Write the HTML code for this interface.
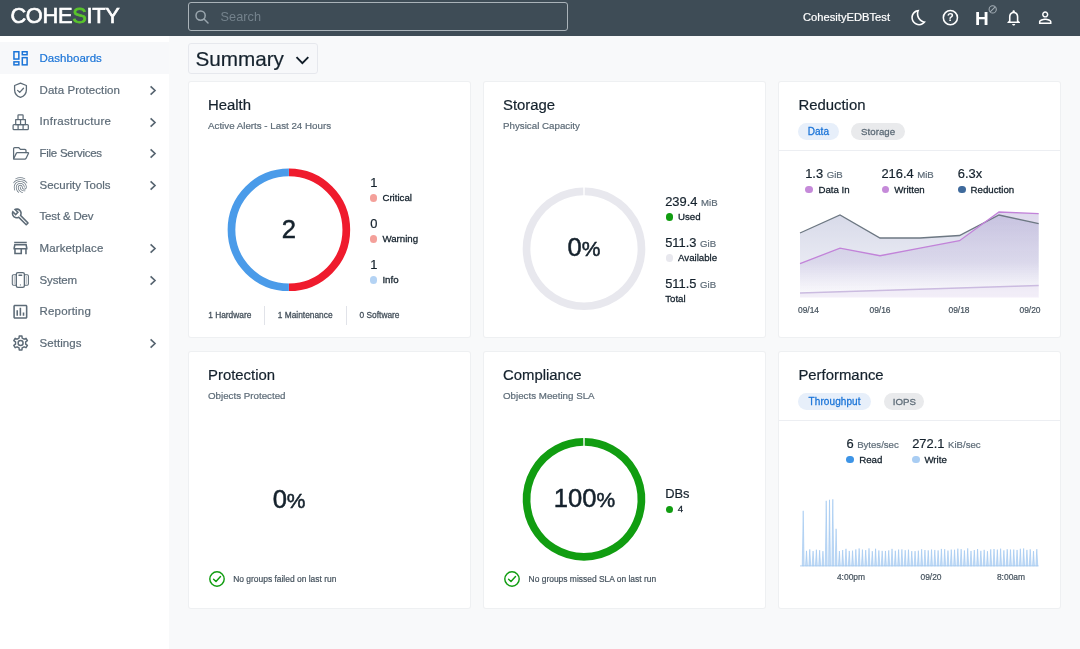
<!DOCTYPE html>
<html lang="en">
<head>
<meta charset="utf-8">
<title>Cohesity Dashboard - Summary</title>
<style>
*{box-sizing:border-box;margin:0;padding:0}
html,body{width:1080px;height:649px;overflow:hidden}
body{font-family:"Liberation Sans",sans-serif;background:#f8f9fa;color:#15222d;position:relative}
.abs{position:absolute}
.t{position:absolute;white-space:nowrap;line-height:1}
#hdr{position:absolute;left:0;top:0;width:1080px;height:36px;background:#3e4c56}
#logo{left:10.4px;top:5.4px;font-size:21.8px;color:#fff;letter-spacing:-0.3px;-webkit-text-stroke:0.65px #fff}
#logo b{font-weight:normal;color:#5ac52c;-webkit-text-stroke:0.8px #5ac52c}
#search{position:absolute;left:188px;top:2px;width:380px;height:29px;border:1px solid #aab3b9;border-radius:3px}
#search .t{left:31.6px;top:7.6px;font-size:12.7px;color:#74828c;letter-spacing:0.05px}
#user{left:803px;top:12px;font-size:11.2px;color:#fff}
#hq{left:945.4px;top:12.1px;width:10px;text-align:center;font-size:11px;font-weight:bold;color:#fff}
#hH{left:975.4px;top:9.7px;font-size:18.6px;font-weight:bold;color:#fff;transform:scaleX(1.02);transform-origin:0 0}
#side{position:absolute;left:0;top:36px;width:169px;height:613px;background:#fff}
.nav{position:absolute;left:0;width:169px;height:31.67px}
.nav.act{background:#f7f8fa}
.nav .t{left:39.5px;top:10.8px;font-size:11.5px;color:#5d6b77;letter-spacing:0.04px}
.nav.act .t{color:#1a74d8}
.nav svg.ic{position:absolute;left:10px;top:6px;width:20px;height:20px;overflow:visible}
.nav svg.ch{position:absolute;left:148.3px;top:11.1px;width:10px;height:11px}
#sumbox{position:absolute;left:187.8px;top:43.3px;width:130px;height:30.4px;border:1px solid #e6e8ed;border-radius:3px;background:#f7f8fa}
#sum{left:6.6px;top:4.4px;font-size:20.7px;color:#15222d}
.card{position:absolute;width:281.2px;height:255.6px;background:#fff;box-shadow:0 0 0 1px #eef0f2;border-radius:2px}
.title{font-size:14.9px;color:#15222d}
.sub{font-size:9.75px;color:#5d6b77}
.num{font-size:12.9px;color:#15222d}
.unit{font-size:9.6px;color:#5d6b77}
.lg{font-size:9.7px;color:#15222d}
.dot{position:absolute;border-radius:50%}
.foot{font-size:8.35px;color:#44505b}
.ax{font-size:8.45px;color:#46535e}
.pill{position:absolute;height:16.6px;border-radius:8.5px;font-size:9.7px;line-height:17.6px;text-align:center;white-space:nowrap}
.pill.on{background:#e7effa;color:#1a74d8}
.pill.off{background:#e9eaec;color:#5d6b77}
.hr{position:absolute;height:1px;background:#eceef2}
.big{font-size:25.6px;color:#15222d;-webkit-text-stroke:0.5px #15222d}
.pct{font-size:21px}
#root{position:absolute;left:0;top:0;width:1080px;height:649px;will-change:transform}
.title,.num,.lg,.sub,.unit,.foot,.ax,.nav .t,#user,#sum{-webkit-text-stroke:0.2px currentColor}
.lg,.foot,.pill{-webkit-text-stroke:0.28px currentColor}
.pill.on{font-size:10px;letter-spacing:0.1px}
</style>
</head>
<body>
<div id="root">
<div id="hdr">
  <div class="t" id="logo">COHE<b>S</b>ITY</div>
  <div id="search">
    <svg class="abs" style="left:4.8px;top:5.7px" width="16" height="16" viewBox="0 0 16 16" fill="none" stroke="#9aa6ae" stroke-width="1.5"><circle cx="6.6" cy="6.6" r="4.6"/><path d="M10 10 L14 14" stroke-linecap="round"/></svg>
    <div class="t">Search</div>
  </div>
  <div class="t" id="user">CohesityEDBTest</div>
  <svg class="abs" style="left:900px;top:0" width="180" height="36" viewBox="900 0 180 36" fill="#fff">
    <g transform="translate(909.7 8.2) scale(0.785)"><path d="M9.27 4.49c-1.63 7.54 3.75 12.41 7.66 13.8C15.54 19.38 13.81 20 12 20c-4.41 0-8-3.59-8-8 0-3.45 2.2-6.4 5.27-7.51M11.99 2.010C6.4 2.010 2 6.540 2 12c0 5.520 4.480 10 10 10 3.710 0 6.930-2.020 8.660-5.020-7.510-.250-12.090-8.430-8.320-14.970h-.350z"/></g>
    <circle cx="950.4" cy="17.65" r="7.05" fill="none" stroke="#fff" stroke-width="1.55"/>
    <circle cx="992.7" cy="9.4" r="3.6" fill="none" stroke="#a3adb5" stroke-width="1.05"/>
    <path d="M990.2 11.9 L995.2 6.900" fill="none" stroke="#a3adb5" stroke-width="1.05"/>
    <g transform="translate(1004.25 8.2) scale(0.785)"><path d="M12 22c1.1 0 2-.9 2-2h-4c0 1.1.9 2 2 2zm6-6v-5c0-3.070-1.630-5.640-4.500-6.320V4c0-.830-.670-1.500-1.500-1.500s-1.500.670-1.500 1.500v.680C7.640 5.360 6 7.920 6 11v5l-2 2v1h16v-1l-2-2zm-2 1H8v-6c0-2.480 1.510-4.500 4-4.500s4 2.020 4 4.500v6z"/></g>
    <g transform="translate(1035.8 8.2) scale(0.785)"><path d="M12 5.900c1.160 0 2.100.940 2.100 2.100s-.940 2.100-2.100 2.100S9.900 9.160 9.900 8s.940-2.100 2.100-2.100m0 9c2.970 0 6.100 1.460 6.100 2.100v1.100H5.900V17c0-.640 3.130-2.100 6.100-2.100M12 4C9.790 4 8 5.790 8 8s1.790 4 4 4 4-1.790 4-4-1.790-4-4-4zm0 9c-2.670 0-8 1.340-8 4v3h16v-3c0-2.660-5.330-4-8-4z"/></g>
  </svg>
  <div class="t" id="hq">?</div>
  <div class="t" id="hH">H</div>
</div>
<div id="side">
<div class="nav act" style="top:6.30px">
<svg class="ic" viewBox="0 0 20 20"><g fill="none" stroke="#1a74d8" stroke-width="1.5"><rect x="3.95" y="3.75" width="4.9" height="7.3"/><rect x="3.95" y="13.85" width="4.9" height="3"/><rect x="12.3" y="3.75" width="4.8" height="3"/><rect x="12.3" y="9.65" width="4.8" height="7.2"/></g></svg>
<div class="t" id="nav0" style="letter-spacing:0.04px">Dashboards</div>
</div>
<div class="nav" style="top:37.97px">
<svg class="ic" viewBox="0 0 20 20"><g fill="none" stroke="#5d6b77" stroke-width="1.3" stroke-linejoin="round" stroke-linecap="round"><path d="M10.5 3.2 L16.4 5.5 V9.8 C16.4 13.6 13.9 16.3 10.5 17.4 C7.1 16.3 4.6 13.6 4.6 9.8 V5.5 Z"/><path d="M7.6 10.4 L9.7 12.4 L13.5 8.3"/></g></svg>
<div class="t" id="nav1" style="letter-spacing:0.08px">Data Protection</div>
<svg class="ch" viewBox="0 0 10 11"><path d="M2.6 1.3 L7 5.500 L2.6 9.7" fill="none" stroke="#566470" stroke-width="1.65"/></svg>
</div>
<div class="nav" style="top:69.64px">
<svg class="ic" viewBox="0 0 20 20"><g fill="none" stroke="#5d6b77" stroke-width="1.25" stroke-linejoin="round"><rect x="8" y="2.8" width="5.1" height="4.8" rx="0.6"/><path d="M8 7.6 H5.7 V12.5 H15.4 V7.6 H13.1 M10.55 7.6 V12.5"/><rect x="3.1" y="12.5" width="15.2" height="5.15" rx="0.9"/><path d="M8.1 12.5 V17.6 M13.1 12.5 V17.6"/></g></svg>
<div class="t" id="nav2" style="letter-spacing:0.29px">Infrastructure</div>
<svg class="ch" viewBox="0 0 10 11"><path d="M2.6 1.3 L7 5.500 L2.6 9.7" fill="none" stroke="#566470" stroke-width="1.65"/></svg>
</div>
<div class="nav" style="top:101.31px">
<svg class="ic" viewBox="0 0 20 20"><g fill="none" stroke="#5d6b77" stroke-width="1.25" stroke-linejoin="round" stroke-linecap="round"><path d="M3.6 15.8 V5.6 Q3.6 4.5 4.7 4.5 H8.6 L10.4 6.4 H14.9 Q16 6.4 16 7.5 V9.6"/><path d="M3.6 15.8 L6.4 10.1 Q6.7 9.6 7.3 9.6 H17.9 Q18.9 9.6 18.4 10.5 L16 15.4 Q15.6 16 15 16 H4 Q3.6 16 3.6 15.8 Z"/></g></svg>
<div class="t" id="nav3" style="letter-spacing:-0.27px">File Services</div>
<svg class="ch" viewBox="0 0 10 11"><path d="M2.6 1.3 L7 5.500 L2.6 9.7" fill="none" stroke="#566470" stroke-width="1.65"/></svg>
</div>
<div class="nav" style="top:132.98px">
<svg class="ic" viewBox="0 0 20 20"><g transform="translate(0.87 0.65) scale(0.785)"><path fill="#6b7883" d="M17.81 4.47c-.08 0-.16-.02-.23-.06C15.66 3.42 14 3 12.01 3c-1.98 0-3.86.47-5.57 1.41-.24.13-.54.04-.68-.2-.13-.24-.04-.55.2-.68C7.82 2.52 9.86 2 12.01 2c2.13 0 3.99.47 6.03 1.52.25.13.34.43.21.67-.09.18-.26.28-.44.28zM3.5 9.72c-.1 0-.2-.03-.29-.09-.23-.16-.28-.47-.12-.7.99-1.4 2.25-2.5 3.75-3.27C9.98 4.04 14 4.03 17.15 5.65c1.5.77 2.76 1.86 3.75 3.25.16.22.11.54-.12.7-.23.16-.54.11-.7-.12-.9-1.26-2.04-2.25-3.39-2.94-2.87-1.47-6.54-1.47-9.4.01-1.36.7-2.5 1.7-3.4 2.96-.08.14-.23.21-.39.21zm6.25 12.07c-.13 0-.26-.05-.35-.15-.87-.87-1.34-1.43-2.01-2.64-.69-1.23-1.05-2.73-1.05-4.34 0-2.97 2.54-5.39 5.66-5.39s5.66 2.42 5.66 5.39c0 .28-.22.5-.5.5s-.5-.22-.5-.5c0-2.42-2.09-4.39-4.66-4.39-2.57 0-4.66 1.97-4.66 4.39 0 1.44.32 2.77.93 3.85.64 1.15 1.08 1.64 1.85 2.42.19.2.19.51 0 .71-.11.1-.24.15-.37.15zm7.17-1.85c-1.19 0-2.24-.3-3.1-.89-1.49-1.01-2.38-2.65-2.38-4.39 0-.28.22-.5.5-.5s.5.22.5.5c0 1.41.72 2.74 1.94 3.56.71.48 1.54.71 2.54.71.24 0 .64-.03 1.04-.1.27-.05.53.13.58.41.05.27-.13.53-.41.58-.57.11-1.07.12-1.21.12zM14.91 22c-.04 0-.09-.01-.13-.02-1.59-.44-2.63-1.03-3.72-2.1-1.4-1.39-2.17-3.24-2.17-5.22 0-1.62 1.38-2.94 3.08-2.94 1.7 0 3.08 1.32 3.08 2.94 0 1.07.93 1.94 2.08 1.94s2.08-.87 2.08-1.94c0-3.77-3.25-6.83-7.25-6.83-2.84 0-5.44 1.58-6.61 4.03-.39.81-.59 1.76-.59 2.8 0 .78.07 2.01.67 3.61.1.26-.03.55-.29.64-.26.1-.55-.04-.64-.29-.49-1.31-.73-2.61-.73-3.96 0-1.2.23-2.29.68-3.24 1.33-2.79 4.28-4.6 7.51-4.6 4.55 0 8.25 3.51 8.25 7.83 0 1.62-1.38 2.94-3.08 2.94s-3.08-1.32-3.08-2.94c0-1.07-.93-1.94-2.08-1.94s-2.08.87-2.08 1.94c0 1.71.66 3.31 1.87 4.51.95.94 1.86 1.46 3.27 1.85.27.07.42.35.35.61-.05.23-.26.38-.47.38z"/></g></svg>
<div class="t" id="nav4" style="letter-spacing:-0.02px">Security Tools</div>
<svg class="ch" viewBox="0 0 10 11"><path d="M2.6 1.3 L7 5.500 L2.6 9.7" fill="none" stroke="#566470" stroke-width="1.65"/></svg>
</div>
<div class="nav" style="top:164.65px">
<svg class="ic" viewBox="0 0 20 20"><g transform="translate(0.9 0.55) scale(0.783)"><path fill="#5d6b77" d="M22.61 18.99l-9.08-9.08c.93-2.34.45-5.1-1.44-7C9.79.61 6.21.4 3.66 2.26L7.5 6.11 6.08 7.52 2.25 3.69C.39 6.23.6 9.82 2.9 12.11c1.86 1.86 4.57 2.35 6.89 1.48l9.11 9.11c.39.39 1.02.39 1.41 0l2.3-2.3c.4-.38.4-1.01 0-1.41zm-3 1.6l-9.46-9.46c-.61.45-1.29.72-2 .82-1.36.2-2.79-.21-3.83-1.25C3.37 9.76 2.93 8.5 3 7.26l3.09 3.09 4.24-4.24-3.09-3.09c1.24-.07 2.49.37 3.44 1.31 1.08 1.08 1.49 2.57 1.24 3.96-.12.71-.42 1.37-.88 1.96l9.45 9.45-.88.89z"/></g></svg>
<div class="t" id="nav5" style="letter-spacing:-0.17px">Test &amp; Dev</div>
</div>
<div class="nav" style="top:196.32px">
<svg class="ic" viewBox="0 0 20 20"><g transform="translate(1.05 0.5) scale(0.785)"><path fill="#5d6b77" d="M18.36 9l.6 3H5.04l.6-3h12.72M20 4H4v2h16V4zm0 3H4l-1 5v2h1v6h10v-6h4v6h2v-6h1v-2l-1-5zM6 18v-4h6v4H6z"/></g></svg>
<div class="t" id="nav6" style="letter-spacing:0.12px">Marketplace</div>
<svg class="ch" viewBox="0 0 10 11"><path d="M2.6 1.3 L7 5.500 L2.6 9.7" fill="none" stroke="#566470" stroke-width="1.65"/></svg>
</div>
<div class="nav" style="top:227.99px">
<svg class="ic" viewBox="0 0 20 20"><g fill="none" stroke="#5d6b77" stroke-width="1.35" stroke-linejoin="round" stroke-linecap="round"><rect x="6.3" y="2.6" width="8.1" height="14.8" rx="1.7"/><path d="M9 5.2 H11.7"/><circle cx="10.35" cy="14.9" r="0.55" fill="#5d6b77" stroke="none"/><path d="M6.2 4.7 H3.5 Q2.3 4.7 2.3 5.9 V14.1 Q2.3 15.3 3.5 15.3 H6.2" stroke-width="1.05"/><path d="M14.5 4.7 H17.2 Q18.4 4.7 18.4 5.9 V14.1 Q18.4 15.3 17.2 15.3 H14.5" stroke-width="1.05"/><path d="M4.3 6.4 V13.6 M16.4 6.4 V13.6" stroke-width="0.7" stroke-opacity="0.6"/></g></svg>
<div class="t" id="nav7" style="letter-spacing:-0.13px">System</div>
<svg class="ch" viewBox="0 0 10 11"><path d="M2.6 1.3 L7 5.500 L2.6 9.7" fill="none" stroke="#566470" stroke-width="1.65"/></svg>
</div>
<div class="nav" style="top:259.66px">
<svg class="ic" viewBox="0 0 20 20"><g transform="translate(0.95 0.3) scale(0.785)"><path fill="#5d6b77" d="M19 3H5c-1.1 0-2 .9-2 2v14c0 1.1.9 2 2 2h14c1.1 0 2-.9 2-2V5c0-1.1-.9-2-2-2zm0 16H5V5h14v14zM7 10h2v7H7zm4-3h2v10h-2zm4 6h2v4h-2z"/></g></svg>
<div class="t" id="nav8" style="letter-spacing:0.18px">Reporting</div>
</div>
<div class="nav" style="top:291.33px">
<svg class="ic" viewBox="0 0 20 20"><g fill="none" stroke="#5d6b77" stroke-width="1.45" stroke-linejoin="round"><path d="M9.08 5.03 L9.23 2.93 L11.97 2.93 L12.12 5.03 L14.15 6.20 L16.03 5.28 L17.41 7.66 L15.67 8.83 L15.67 11.17 L17.41 12.34 L16.03 14.72 L14.15 13.80 L12.12 14.97 L11.97 17.07 L9.23 17.07 L9.08 14.97 L7.05 13.80 L5.17 14.72 L3.79 12.34 L5.53 11.17 L5.53 8.83 L3.79 7.66 L5.17 5.28 L7.05 6.20 Z"/><circle cx="10.6" cy="10.0" r="2.5"/></g></svg>
<div class="t" id="nav9" style="letter-spacing:0.06px">Settings</div>
<svg class="ch" viewBox="0 0 10 11"><path d="M2.6 1.3 L7 5.500 L2.6 9.7" fill="none" stroke="#566470" stroke-width="1.65"/></svg>
</div>
</div>
<div id="sumbox"><div class="t" id="sum">Summary</div><svg class="abs" style="left:106.5px;top:10.9px" width="15" height="10" viewBox="0 0 15 10"><path d="M1.5 2.2 L7.4 8.1 L13.3 2.2" fill="none" stroke="#111d28" stroke-width="1.9"/></svg></div>
<div class="card" style="left:188.6px;top:81.7px;height:255.3px"></div>
<div class="card" style="left:483.9px;top:81.7px;height:255.3px"></div>
<div class="card" style="left:779.2px;top:81.7px;height:255.3px"></div>
<div class="card" style="left:188.6px;top:351.9px;height:256.1px"></div>
<div class="card" style="left:483.9px;top:351.9px;height:256.1px"></div>
<div class="card" style="left:779.2px;top:351.9px;height:256.1px"></div>
<div class="t title" id="t_health" style="left:208px;top:97.59px;">Health</div>
<div class="t sub" id="s_health" style="left:208px;top:121.15px;">Active Alerts - Last 24 Hours</div>
<svg class="abs" style="left:220px;top:160px" width="140" height="140" viewBox="220 160 140 140"><path d="M288.90 172.35 A57.45 57.45 0 0 1 288.90 287.25" fill="none" stroke="#ef1b2d" stroke-width="7.7"/><path d="M288.90 287.25 A57.45 57.45 0 0 1 288.90 172.35" fill="none" stroke="#4a9be9" stroke-width="7.7"/></svg>
<div class="t big" id="h2" style="left:268.9px;top:216.73px;width:40px;text-align:center">2</div>
<div class="t num" style="left:370.2px;top:176.68px;">1</div>
<div class="dot" style="left:369.8px;top:194.29999999999998px;width:7.6px;height:7.6px;background:#f4a09a"></div>
<div class="t lg" id="hl0" style="left:382.4px;top:193.49px;">Critical</div>
<div class="t num" style="left:370.2px;top:217.68px;">0</div>
<div class="dot" style="left:369.8px;top:235.29999999999998px;width:7.6px;height:7.6px;background:#f4a09a"></div>
<div class="t lg" id="hl1" style="left:382.4px;top:234.49px;">Warning</div>
<div class="t num" style="left:370.2px;top:258.68px;">1</div>
<div class="dot" style="left:369.8px;top:276.3px;width:7.6px;height:7.6px;background:#b4d3f4"></div>
<div class="t lg" id="hl2" style="left:382.4px;top:275.49px;">Info</div>
<div class="t foot" id="f1" style="left:208.2px;top:311.03px;">1 Hardware</div>
<div class="t foot" id="f2" style="left:277.8px;top:311.03px;">1 Maintenance</div>
<div class="t foot" id="f3" style="left:359.6px;top:311.03px;">0 Software</div>
<div class="abs" style="left:264.2px;top:306px;width:1px;height:18.5px;background:#e1e3e9"></div>
<div class="abs" style="left:346.1px;top:306px;width:1px;height:18.5px;background:#e1e3e9"></div>
<div class="t title" id="t_stor" style="left:503px;top:97.59px;">Storage</div>
<div class="t sub" id="s_stor" style="left:503px;top:121.15px;">Physical Capacity</div>
<svg class="abs" style="left:515px;top:180px" width="140" height="140" viewBox="515 180 140 140"><path d="M584.70 191.35 A57.45 57.45 0 1 1 583.30 191.35" fill="none" stroke="#e8e8ee" stroke-width="7.7"/></svg>
<div class="t big" id="s0" style="left:544px;top:235.43px;width:80px;text-align:center">0<span class="pct">%</span></div>
<div class="t num" id="st0" style="left:665.2px;top:195.58px;">239.4 <span class="unit">MiB</span></div>
<div class="dot" style="left:665.6px;top:213.29999999999998px;width:7.6px;height:7.6px;background:#119d11"></div>
<div class="t lg" id="sl0" style="left:678px;top:212.39px;">Used</div>
<div class="t num" id="st1" style="left:665.2px;top:236.58px;">511.3 <span class="unit">GiB</span></div>
<div class="dot" style="left:665.6px;top:254.3px;width:7.6px;height:7.6px;background:#e8e8ee"></div>
<div class="t lg" id="sl1" style="left:678px;top:253.39px;">Available</div>
<div class="t num" id="st2" style="left:665.2px;top:277.58px;">511.5 <span class="unit">GiB</span></div>
<div class="t lg" id="sl2" style="left:665.2px;top:294.39px;">Total</div>
<div class="t title" id="t_red" style="left:798.4px;top:97.59px;">Reduction</div>
<div class="pill on" id="p_data" style="left:798px;top:123px;width:40.8px">Data</div>
<div class="pill off" id="p_stor" style="left:851.2px;top:123px;width:53.8px">Storage</div>
<div class="hr" style="left:779.2px;top:149.6px;width:281.2px"></div>
<div class="t num" id="r1" style="left:805.2px;top:167.58px;">1.3 <span class="unit">GiB</span></div>
<div class="t num" id="r2" style="left:881.4px;top:167.58px;">216.4 <span class="unit">MiB</span></div>
<div class="t num" id="r3" style="left:957.8px;top:167.58px;">6.3x</div>
<div class="dot" style="left:805.4000000000001px;top:185.7px;width:7.6px;height:7.6px;background:#c58ad9"></div>
<div class="t lg" id="rl1" style="left:818.4px;top:184.79px;">Data In</div>
<div class="dot" style="left:881.7px;top:185.7px;width:7.6px;height:7.6px;background:#c58ad9"></div>
<div class="t lg" id="rl2" style="left:894.2px;top:184.79px;">Written</div>
<div class="dot" style="left:958.0px;top:185.7px;width:7.6px;height:7.6px;background:#3f6a9c"></div>
<div class="t lg" id="rl3" style="left:970.6px;top:184.79px;">Reduction</div>
<svg class="abs" style="left:790px;top:200px" width="260" height="100" viewBox="790 200 260 100">
<defs><linearGradient id="g1" gradientUnits="userSpaceOnUse" x1="0" y1="212" x2="0" y2="297.5"><stop offset="0" stop-color="#bcc0da" stop-opacity="0.6"/><stop offset="0.6" stop-color="#c6c9e0" stop-opacity="0.4"/><stop offset="1" stop-color="#d9dbea" stop-opacity="0.05"/></linearGradient>
<linearGradient id="g2" gradientUnits="userSpaceOnUse" x1="0" y1="212" x2="0" y2="297.5"><stop offset="0" stop-color="#ae9fd2" stop-opacity="0.4"/><stop offset="0.6" stop-color="#bdb3dc" stop-opacity="0.3"/><stop offset="1" stop-color="#ddd0ee" stop-opacity="0.04"/></linearGradient></defs>
<polygon points="800,233 840,215 880,238 920,238 959.5,235.5 999,215 1038.7,223.7 1038.7,297.5 800,297.5" fill="url(#g1)"/>
<polygon points="800,263.7 840,248.2 880,255.7 920,248.2 959.5,240.7 999,212 1038.7,213.7 1038.7,297.5 800,297.5" fill="url(#g2)"/>
<polygon points="800,293 1038.7,285.5 1038.7,297.5 800,297.5" fill="#ebe4f4" fill-opacity="0.55"/>
<polyline points="800,233 840,215 880,238 920,238 959.5,235.5 999,215 1038.7,223.7" fill="none" stroke="#6d7883" stroke-width="1.35"/>
<polyline points="800,263.7 840,248.2 880,255.7 920,248.2 959.5,240.7 999,212 1038.7,213.7" fill="none" stroke="#c283d9" stroke-width="1.35"/>
<polyline points="800,293 1038.7,285.5" fill="none" stroke="#cbbbe0" stroke-width="1.3"/>
</svg>
<div class="t ax" style="left:788.5px;top:306.35px;width:40px;text-align:center">09/14</div>
<div class="t ax" style="left:860px;top:306.35px;width:40px;text-align:center">09/16</div>
<div class="t ax" style="left:939px;top:306.35px;width:40px;text-align:center">09/18</div>
<div class="t ax" style="left:1010px;top:306.35px;width:40px;text-align:center">09/20</div>
<div class="t title" id="t_prot" style="left:208px;top:367.59px;">Protection</div>
<div class="t sub" id="s_prot" style="left:208px;top:391.15px;">Objects Protected</div>
<div class="t big" id="p0" style="left:249.1px;top:486.53px;width:80px;text-align:center">0<span class="pct">%</span></div>
<svg class="abs" style="left:208px;top:570.3px" width="18" height="18" viewBox="0 0 18 18" fill="none" stroke="#119d11" stroke-width="1.45"><circle cx="9" cy="9" r="7.2"/><path d="M5.6 9.3 L8 11.6 L12.5 6.6" stroke-linecap="round" stroke-linejoin="round"/></svg>
<div class="t ax" id="p_foot" style="left:233.2px;top:574.65px;">No groups failed on last run</div>
<div class="t title" id="t_comp" style="left:503px;top:367.59px;">Compliance</div>
<div class="t sub" id="s_comp" style="left:503px;top:391.15px;">Objects Meeting SLA</div>
<svg class="abs" style="left:515px;top:430px" width="140" height="140" viewBox="515 430 140 140"><path d="M584.70 441.95 A57.45 57.45 0 1 1 583.30 441.95" fill="none" stroke="#119d11" stroke-width="7.7"/></svg>
<div class="t big" id="c100" style="left:534.5px;top:486.23px;width:100px;text-align:center">100<span class="pct">%</span></div>
<div class="t num" id="dbs" style="left:665.2px;top:487.88px;">DBs</div>
<div class="dot" style="left:665.6px;top:505.5px;width:7.6px;height:7.6px;background:#119d11"></div>
<div class="t lg" style="left:677.8px;top:504.49px;">4</div>
<svg class="abs" style="left:503.29999999999995px;top:570.3px" width="18" height="18" viewBox="0 0 18 18" fill="none" stroke="#119d11" stroke-width="1.45"><circle cx="9" cy="9" r="7.2"/><path d="M5.6 9.3 L8 11.6 L12.5 6.6" stroke-linecap="round" stroke-linejoin="round"/></svg>
<div class="t ax" id="c_foot" style="left:528.6px;top:574.65px;">No groups missed SLA on last run</div>
<div class="t title" id="t_perf" style="left:798.4px;top:367.59px;">Performance</div>
<div class="pill on" id="p_thr" style="left:798px;top:393px;width:73.2px">Throughput</div>
<div class="pill off" id="p_iops" style="left:884.2px;top:393px;width:40.3px">IOPS</div>
<div class="hr" style="left:779.2px;top:419.6px;width:281.2px"></div>
<div class="t num" id="pf1" style="left:846.4px;top:437.78px;">6 <span class="unit">Bytes/sec</span></div>
<div class="t num" id="pf2" style="left:912.2px;top:437.78px;">272.1 <span class="unit">KiB/sec</span></div>
<div class="dot" style="left:846.2px;top:455.7px;width:7.6px;height:7.6px;background:#3d94e6"></div>
<div class="t lg" id="pl1" style="left:859.2px;top:454.79px;">Read</div>
<div class="dot" style="left:912.0px;top:455.7px;width:7.6px;height:7.6px;background:#a9cdf3"></div>
<div class="t lg" id="pl2" style="left:924.4px;top:454.79px;">Write</div>
<svg class="abs" style="left:790px;top:490px" width="260" height="80" viewBox="790 490 260 80">
<path d="M800 565.8 H1038.6" stroke="#c4dbf3" stroke-width="1.2" fill="none"/>
<path d="M802.25 565.8 L803.20 510.80 L804.15 565.8 Z M805.54 565.8 L806.49 550.85 L807.44 565.8 Z M808.83 565.8 L809.78 549.35 L810.73 565.8 Z M812.12 565.8 L813.07 551.08 L814.02 565.8 Z M815.41 565.8 L816.36 549.69 L817.31 565.8 Z M818.70 565.8 L819.65 550.20 L820.60 565.8 Z M821.99 565.8 L822.94 551.13 L823.89 565.8 Z M825.28 565.8 L826.23 500.80 L827.18 565.8 Z M828.57 565.8 L829.52 499.80 L830.47 565.8 Z M831.86 565.8 L832.81 499.30 L833.76 565.8 Z M835.15 565.8 L836.10 528.80 L837.05 565.8 Z M838.44 565.8 L839.39 551.03 L840.34 565.8 Z M841.73 565.8 L842.68 550.03 L843.63 565.8 Z M845.02 565.8 L845.97 548.82 L846.92 565.8 Z M848.31 565.8 L849.26 550.93 L850.21 565.8 Z M851.60 565.8 L852.55 550.63 L853.50 565.8 Z M854.89 565.8 L855.84 549.42 L856.79 565.8 Z M858.18 565.8 L859.13 548.46 L860.08 565.8 Z M861.47 565.8 L862.42 549.57 L863.37 565.8 Z M864.76 565.8 L865.71 550.11 L866.66 565.8 Z M868.05 565.8 L869.00 548.37 L869.95 565.8 Z M871.34 565.8 L872.29 551.16 L873.24 565.8 Z M874.63 565.8 L875.58 548.72 L876.53 565.8 Z M877.92 565.8 L878.87 550.43 L879.82 565.8 Z M881.21 565.8 L882.16 550.87 L883.11 565.8 Z M884.50 565.8 L885.45 550.95 L886.40 565.8 Z M887.79 565.8 L888.74 550.37 L889.69 565.8 Z M891.08 565.8 L892.03 548.85 L892.98 565.8 Z M894.37 565.8 L895.32 550.76 L896.27 565.8 Z M897.66 565.8 L898.61 549.56 L899.56 565.8 Z M900.95 565.8 L901.90 549.38 L902.85 565.8 Z M904.24 565.8 L905.19 550.18 L906.14 565.8 Z M907.53 565.8 L908.48 549.66 L909.43 565.8 Z M910.82 565.8 L911.77 551.11 L912.72 565.8 Z M914.11 565.8 L915.06 551.12 L916.01 565.8 Z M917.40 565.8 L918.35 550.68 L919.30 565.8 Z M920.70 565.8 L921.65 549.26 L922.60 565.8 Z M923.99 565.8 L924.94 550.02 L925.89 565.8 Z M927.28 565.8 L928.23 550.36 L929.18 565.8 Z M930.57 565.8 L931.52 549.54 L932.47 565.8 Z M933.86 565.8 L934.81 549.94 L935.76 565.8 Z M937.15 565.8 L938.10 550.40 L939.05 565.8 Z M940.44 565.8 L941.39 548.92 L942.34 565.8 Z M943.73 565.8 L944.68 549.20 L945.63 565.8 Z M947.02 565.8 L947.97 550.57 L948.92 565.8 Z M950.31 565.8 L951.26 549.58 L952.21 565.8 Z M953.60 565.8 L954.55 549.72 L955.50 565.8 Z M956.89 565.8 L957.84 548.67 L958.79 565.8 Z M960.18 565.8 L961.13 549.11 L962.08 565.8 Z M963.47 565.8 L964.42 550.44 L965.37 565.8 Z M966.76 565.8 L967.71 548.36 L968.66 565.8 Z M970.05 565.8 L971.00 550.95 L971.95 565.8 Z M973.34 565.8 L974.29 550.05 L975.24 565.8 Z M976.63 565.8 L977.58 549.03 L978.53 565.8 Z M979.92 565.8 L980.87 550.84 L981.82 565.8 Z M983.21 565.8 L984.16 549.83 L985.11 565.8 Z M986.50 565.8 L987.45 551.18 L988.40 565.8 Z M989.79 565.8 L990.74 549.30 L991.69 565.8 Z M993.08 565.8 L994.03 549.01 L994.98 565.8 Z M996.37 565.8 L997.32 549.58 L998.27 565.8 Z M999.66 565.8 L1000.61 548.67 L1001.56 565.8 Z M1002.95 565.8 L1003.90 550.36 L1004.85 565.8 Z M1006.24 565.8 L1007.19 549.21 L1008.14 565.8 Z M1009.53 565.8 L1010.48 549.52 L1011.43 565.8 Z M1012.82 565.8 L1013.77 549.56 L1014.72 565.8 Z M1016.11 565.8 L1017.06 549.93 L1018.01 565.8 Z M1019.40 565.8 L1020.35 548.78 L1021.30 565.8 Z M1022.69 565.8 L1023.64 548.47 L1024.59 565.8 Z M1025.98 565.8 L1026.93 549.88 L1027.88 565.8 Z M1029.27 565.8 L1030.22 549.31 L1031.17 565.8 Z M1032.56 565.8 L1033.51 551.12 L1034.46 565.8 Z M1035.85 565.8 L1036.80 549.20 L1037.75 565.8 Z" fill="#c6ddf6" stroke="#94c0ee" stroke-width="0.55"/>
</svg>
<div class="t ax" style="left:826px;top:573.45px;width:50px;text-align:center">4:00pm</div>
<div class="t ax" style="left:906px;top:573.45px;width:50px;text-align:center">09/20</div>
<div class="t ax" style="left:986px;top:573.45px;width:50px;text-align:center">8:00am</div>
</div>
</body>
</html>
